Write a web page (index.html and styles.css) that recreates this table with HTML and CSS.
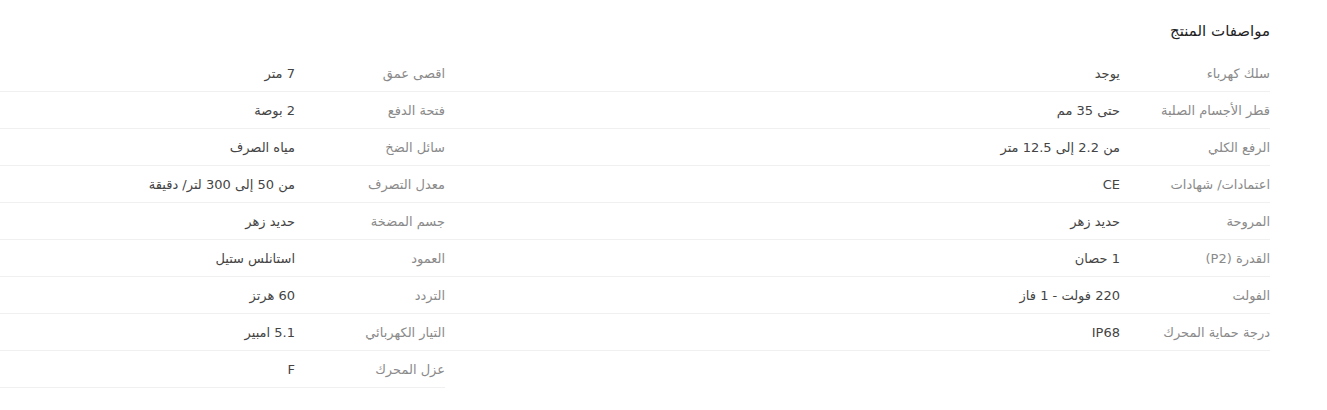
FILE: index.html
```html
<!DOCTYPE html>
<html lang="ar" dir="rtl">

<head>
    <meta charset="UTF-8">
    <meta name="viewport" content="width=device-width, initial-scale=1.0">
    <title>مواصفات المنتج</title>
    <link rel="stylesheet" href="styles.css">
</head>

<body>
    <div class="specs-container">
        <h2 class="specs-title">مواصفات المنتج</h2>

        <div class="specs-grid">
            <div class="specs-col specs-col-main">
                <div class="spec-row"><span class="spec-label">سلك كهرباء</span><span class="spec-value">يوجد</span></div>
                <div class="spec-row"><span class="spec-label">قطر الأجسام الصلبة</span><span class="spec-value">حتى 35 مم</span></div>
                <div class="spec-row"><span class="spec-label">الرفع الكلي</span><span class="spec-value">من 2.2 إلى 12.5 متر</span></div>
                <div class="spec-row"><span class="spec-label">اعتمادات/ شهادات</span><span class="spec-value">CE</span></div>
                <div class="spec-row"><span class="spec-label">المروحة</span><span class="spec-value">حديد زهر</span></div>
                <div class="spec-row"><span class="spec-label">القدرة (P2)</span><span class="spec-value">1 حصان</span></div>
                <div class="spec-row"><span class="spec-label">الفولت</span><span class="spec-value">220 فولت - 1 فاز</span></div>
                <div class="spec-row"><span class="spec-label">درجة حماية المحرك</span><span class="spec-value">IP68</span></div>
            </div>

            <div class="specs-col specs-col-side">
                <div class="spec-row"><span class="spec-label">اقصى عمق</span><span class="spec-value">7 متر</span></div>
                <div class="spec-row"><span class="spec-label">فتحة الدفع</span><span class="spec-value">2 بوصة</span></div>
                <div class="spec-row"><span class="spec-label">سائل الضخ</span><span class="spec-value">مياه الصرف</span></div>
                <div class="spec-row"><span class="spec-label">معدل التصرف</span><span class="spec-value">من 50 إلى 300 لتر/ دقيقة</span></div>
                <div class="spec-row"><span class="spec-label">جسم المضخة</span><span class="spec-value">حديد زهر</span></div>
                <div class="spec-row"><span class="spec-label">العمود</span><span class="spec-value">استانلس ستيل</span></div>
                <div class="spec-row"><span class="spec-label">التردد</span><span class="spec-value">60 هرتز</span></div>
                <div class="spec-row"><span class="spec-label">التيار الكهربائي</span><span class="spec-value">5.1 امبير</span></div>
                <div class="spec-row"><span class="spec-label">عزل المحرك</span><span class="spec-value">F</span></div>
            </div>
        </div>
    </div>
</body>

</html>
```

FILE: styles.css
```css
body {
    font-family: "DejaVu Sans", "Noto Sans", sans-serif;
    margin: 0;
    padding: 0;
    background-color: #fff;
    color: #333;
}

.specs-container {
    padding: 19px 57px 0 0;
}

.specs-title {
    font-size: 15px;
    font-weight: normal;
    color: #222;
    margin: 0 0 12px 0;
    line-height: 24px;
}

.specs-grid {
    display: grid;
    grid-template-columns: 825px 445px;
}

.spec-row {
    display: flex;
    align-items: center;
    height: 36px;
    border-bottom: 1px solid #f0f0f0;
    font-size: 13px;
}

.spec-label {
    width: 150px;
    color: #8a8a8a;
}

.spec-value {
    color: #444;
}
```
